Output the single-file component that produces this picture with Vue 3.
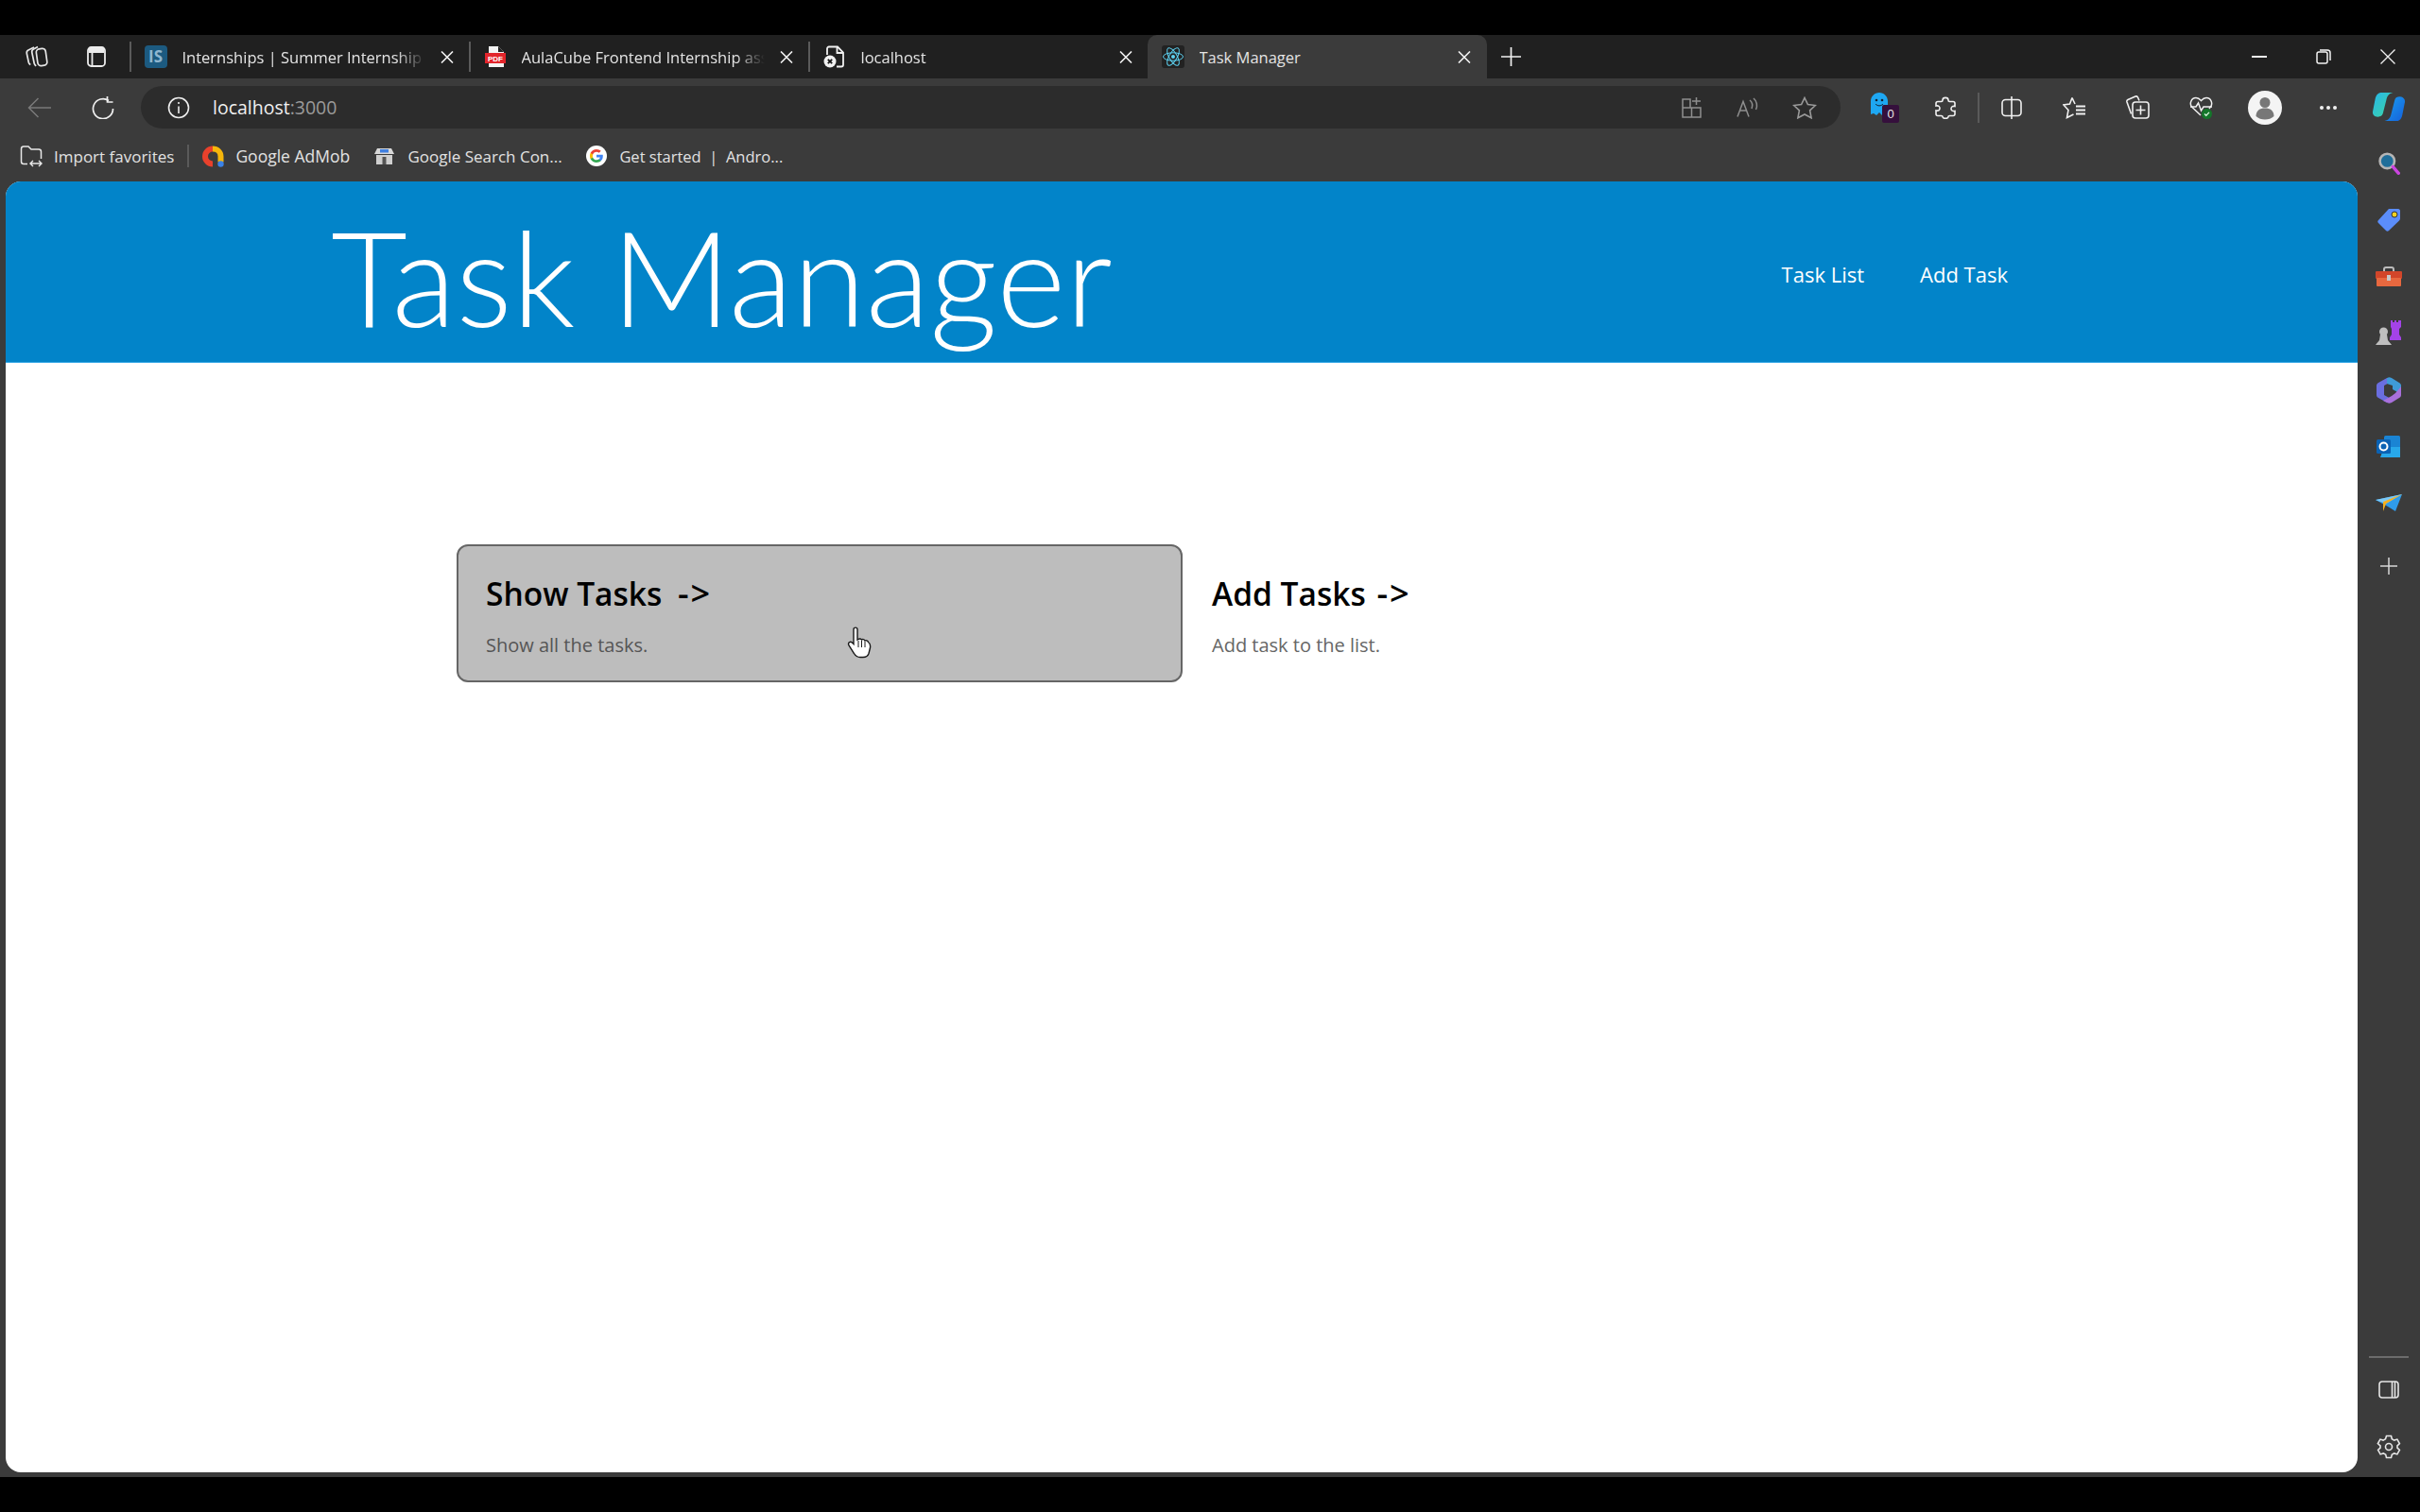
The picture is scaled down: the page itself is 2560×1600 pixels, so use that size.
<template>
  <div class="screen">
    <div class="tabstrip">
      <button class="strip-btn">
        <svg width="26" height="24" viewBox="0 0 26 24" fill="none" stroke="#e6e6e6" stroke-width="1.7">
          <path d="M10 2 4 5C2.500 5.800 2 7 2.300 8.500l2 9.500c.3 1.300 1 2 2 2.600" />
          <path d="M14 1.500 9.500 4C8 4.800 7.500 6 7.800 7.500l2.400 11.500c.3 1.300 1 2 2 2.800" />
          <rect x="13" y="3.500" width="10" height="18" rx="3.500" transform="rotate(-8 18 12)" />
        </svg>
      </button>
      <button class="strip-btn">
        <svg width="20" height="22" viewBox="0 0 20 22" fill="none" stroke="#ececec" stroke-width="1.8">
          <rect x="1" y="1" width="18" height="20" rx="3.500" />
          <path d="M5.500 7v14" />
          <path d="M2 2h16v5H2z" fill="#ececec" stroke="none" />
        </svg>
      </button>
      <template v-for="tab in tabs" :key="tab.title">
        <span class="tab-sep" :class="{ hidden: tab.noSep }"></span>
        <div class="tab" :class="{ active: tab.active }">
          <span v-if="tab.icon === 'is'" class="favicon fav-is">IS</span>
          <svg v-else-if="tab.icon === 'pdf'" class="favicon" viewBox="0 0 24 24">
            <path d="M5 1h10l6 6v16H5z" fill="#f4f4f4" />
            <path d="M15 1v6h6z" fill="#222" />
            <rect x="1" y="8" width="22" height="11" fill="#e2252b" />
            <text x="12" y="16.500" font-size="8" font-weight="700" fill="#fff" text-anchor="middle" font-family="Liberation Sans, sans-serif">PDF</text>
          </svg>
          <svg v-else-if="tab.icon === 'doc'" class="favicon" viewBox="0 0 24 24" fill="none">
            <path d="M4 10V3.500C4 2.500 4.800 1.500 6 1.500h9l6 6v13c0 1.200-1 2-2 2h-5" stroke="#f0f0f0" stroke-width="1.800" />
            <path d="M14.500 1.500v6.500H21" stroke="#f0f0f0" stroke-width="1.800" />
            <circle cx="7" cy="17" r="6.500" fill="#f0f0f0" />
            <path d="m4.800 14.800 4.400 4.400M9.200 14.800l-4.400 4.400" stroke="#111" stroke-width="1.800" />
          </svg>
          <svg v-else class="favicon fav-react" viewBox="0 0 24 24" fill="none" stroke="#5ed3f3" stroke-width="1">
            <ellipse cx="12" cy="12" rx="10.500" ry="4.200" />
            <ellipse cx="12" cy="12" rx="10.500" ry="4.200" transform="rotate(60 12 12)" />
            <ellipse cx="12" cy="12" rx="10.500" ry="4.200" transform="rotate(120 12 12)" />
            <circle cx="12" cy="12" r="2" fill="#5ed3f3" stroke="none" />
          </svg>
          <span class="tab-title">{{ tab.title }}</span>
          <svg class="tab-close" width="14" height="13" viewBox="0 0 14 13" stroke="#f2f2f2" stroke-width="1.600">
            <path d="m1 .5 12 12M13 .5l-12 12" />
          </svg>
        </div>
      </template>
      <button class="new-tab">
        <svg width="21" height="20" viewBox="0 0 21 20" stroke="#f0f0f0" stroke-width="1.700">
          <path d="M10.500 0v20M0 10h21" />
        </svg>
      </button>
      <div class="window-btns">
        <button class="win-btn">
          <svg width="16" height="6" viewBox="0 0 16 6" stroke="#f2f2f2" stroke-width="2"><path d="M0 3h16" /></svg>
        </button>
        <button class="win-btn">
          <svg width="16" height="16" viewBox="0 0 16 16" fill="none" stroke="#f2f2f2" stroke-width="1.500">
            <rect x="1" y="3" width="11" height="12" rx="2" />
            <path d="M4 1h8c1.800 0 3 1.200 3 3v8" />
          </svg>
        </button>
        <button class="win-btn">
          <svg width="16" height="16" viewBox="0 0 16 16" stroke="#f2f2f2" stroke-width="1.300"><path d="m.5.500 15 15M15.500.500l-15 15" /></svg>
        </button>
      </div>
    </div>

    <div class="browser">
      <div class="left-col">
        <div class="toolbar">
          <button class="nav-btn">
            <svg width="25" height="22" viewBox="0 0 25 22" fill="none" stroke="#7a7a7a" stroke-width="1.500"><path d="M25 11H2M11.500 1 1.500 11l10 10" /></svg>
          </button>
          <button class="nav-btn">
            <svg width="25" height="24" viewBox="0 0 25 24" fill="none" stroke="#efefef" stroke-width="1.700"><path d="M19 4.500A10.500 10.500 0 1 0 23.500 13" /><path d="M17.500 0v6h6" /></svg>
          </button>
          <div class="address">
            <svg width="24" height="24" viewBox="0 0 24 24" fill="none" stroke="#ededed" stroke-width="1.600">
              <circle cx="12" cy="12" r="10.500" /><path d="M12 10.500V18M12 6v2" />
            </svg>
            <span class="url">localhost<span class="url-port">:3000</span></span>
            <div class="address-icons">
              <button class="addr-btn">
                <svg width="21" height="22" viewBox="0 0 21 22" fill="none" stroke="#8e8e8e" stroke-width="1.500">
                  <path d="M1 2h8v9H1zM1 11h19v10H1zM10.500 11v10M15.500 0v8M11 4h9" />
                </svg>
              </button>
              <button class="addr-btn">
                <svg width="24" height="21" viewBox="0 0 24 21" fill="none" stroke="#8e8e8e" stroke-width="1.500">
                  <path d="m1 20.500 6-16 6 16M3.500 14h7M14 3c2.500 2 3.500 5 2 9M18 1c3.500 3 4.500 8 2.500 12" />
                </svg>
              </button>
              <button class="addr-btn">
                <svg width="26" height="24" viewBox="0 0 26 24" fill="none" stroke="#9a9a9a" stroke-width="1.600">
                  <path d="m13 1.500 3.400 7 8 1-5.800 5.300 1.500 8L13 19l-7.100 3.800 1.500-8L1.600 9.500l8-1z" />
                </svg>
              </button>
            </div>
          </div>
          <button class="tool-btn first">
            <svg width="30" height="32" viewBox="0 0 30 32">
              <path d="M0 23V9C0 4 4 0 9 0s9 4 9 9v14l-3-2-3 3-3-3-3 3-3-2z" fill="#1ea7f2" />
              <circle cx="6" cy="8" r="1.300" fill="#123" /><circle cx="12" cy="8" r="1.300" fill="#123" />
              <path d="M5 12c2 2.500 6 2.500 8 0" fill="none" stroke="#123" stroke-width="1" />
              <rect x="12" y="13" width="18" height="19" rx="2" fill="#35103c" />
              <text x="21" y="27" font-size="13" fill="#e6e6e6" text-anchor="middle" font-family="Liberation Sans, sans-serif">0</text>
            </svg>
          </button>
          <button class="tool-btn">
            <svg width="22" height="24" viewBox="0 0 22 24" fill="none" stroke="#f0f0f0" stroke-width="1.600">
              <path d="M8 4c0-3.500 6-3.500 6 0 0 1 .3 1.500 1.500 1.500H19c1 0 2 1 2 2v3c-3-.5-4 1-4 2.500s1 3 4 2.500v3c0 1-1 2-2 2h-3.500c-1 0-1.500.3-1.500 1 0 2.500-6 2.500-6 0 0-.7-.5-1-1.500-1H3c-1 0-2-1-2-2v-3.500c3 .7 4-1 4-2.500s-1-3-4-2.500V7.500c0-1 1-2 2-2h3.500C7.500 5.500 8 5 8 4z" />
            </svg>
          </button>
          <span class="tool-sep"></span>
          <button class="tool-btn wide">
            <svg width="22" height="24" viewBox="0 0 22 24" fill="none" stroke="#f0f0f0" stroke-width="1.600">
              <rect x="1" y="3.500" width="20" height="17" rx="3.500" /><path d="M11 0v24" />
            </svg>
          </button>
          <button class="tool-btn wide">
            <svg width="25" height="24" viewBox="0 0 25 24" fill="none" stroke="#f0f0f0" stroke-width="1.600">
              <path d="M10 1.500 7.500 8 1 9l5 5.500L4.500 22.500l7-3.500M10 1.500 13 8" /><path d="M14 10.500h10M14 14.500h10M14 18.500h10" stroke-width="2" />
            </svg>
          </button>
          <button class="tool-btn wide">
            <svg width="25" height="25" viewBox="0 0 25 25" fill="none" stroke="#f0f0f0" stroke-width="1.600">
              <path d="M5.500 19.500 1 7C.6 5.800 1 5 2 4.500L10 1c1-.4 2 0 2.500 1l1.500 3.500" />
              <rect x="7" y="7" width="17" height="17" rx="3" /><path d="M15.500 10.500v10M10.500 15.500h10" />
            </svg>
          </button>
          <button class="tool-btn wide">
            <svg width="25" height="24" viewBox="0 0 25 24" fill="none">
              <path d="M12 20 3 11.500C-.500 8 2 1.500 7 1.500c2.500 0 4 1.300 5.500 3 1.500-1.700 3-3 5.500-3 5 0 7.500 6.500 4 10L21 13" stroke="#f0f0f0" stroke-width="1.500" />
              <path d="M1 11h6l2.500-4 3 8 2.500-4h9" stroke="#f0f0f0" stroke-width="1.500" />
              <circle cx="18.500" cy="18.500" r="5.500" fill="#14772a" />
              <path d="m16 18.500 1.800 1.800 3.200-3.400" stroke="#d8f5dd" stroke-width="1.300" />
            </svg>
          </button>
          <button class="tool-btn wide avatar-btn">
            <span class="avatar">
              <svg width="36" height="36" viewBox="0 0 36 36">
                <circle cx="18" cy="12.500" r="5.500" fill="#777" />
                <path d="M8.500 27c0-6 4-8.500 9.500-8.500s9.500 2.500 9.500 8.500c-2.500 2.500-6 3.500-9.500 3.500s-7-1-9.500-3.500z" fill="#777" />
              </svg>
            </span>
          </button>
          <button class="tool-btn wide dots-btn">
            <svg width="20" height="6" viewBox="0 0 20 6" fill="#f0f0f0"><circle cx="3" cy="3" r="2" /><circle cx="10" cy="3" r="2" /><circle cx="17" cy="3" r="2" /></svg>
          </button>
        </div>

        <div class="bookmarks">
          <div class="bookmark import">
            <svg width="24" height="23" viewBox="0 0 24 23" fill="none" stroke="#e8e8e8" stroke-width="1.500">
              <path d="M8 19.500H4c-1.500 0-2.500-1-2.500-2.500V3.500C1.500 2 2.500 1 4 1h5l3 3h8c1.500 0 2.500 1 2.500 2.500V14" />
              <path d="M11 19h12M14 16l-3 3 3 3M20 16l3 3-3 3" stroke-width="1.400" />
            </svg>
            <span>Import favorites</span>
          </div>
          <span class="book-sep"></span>
          <div class="bookmark admob">
            <svg width="23" height="23" viewBox="0 0 23 23" fill="none">
              <path d="M11 3.500a8 8 0 0 0 0 16" stroke="#e8412c" stroke-width="6" />
              <path d="M11 3.500c5 0 8.500 3.500 8.500 8v6" stroke="#f6b60b" stroke-width="6" />
              <circle cx="19.500" cy="19.500" r="3.200" fill="#3b82e6" />
            </svg>
            <span>Google AdMob</span>
          </div>
          <div class="bookmark gsc">
            <svg width="21" height="17" viewBox="0 0 21 17">
              <path d="M3 0h15l3 6H0z" fill="#d8d8d8" />
              <rect x="6" y="1" width="9" height="3.500" fill="#3f7fe0" />
              <rect x="2" y="7" width="17" height="10" fill="#cfcfcf" />
              <path d="M8.500 9h4v8h-4z" fill="#555" />
            </svg>
            <span>Google Search Con...</span>
          </div>
          <div class="bookmark google">
            <svg width="22" height="22" viewBox="0 0 22 22">
              <circle cx="11" cy="11" r="11" fill="#fff" />
              <path d="M17.800 11.200c0-.5 0-1-.1-1.400H11v2.700h3.800c-.2.900-.7 1.600-1.400 2.100v1.700h2.300c1.300-1.200 2.100-3 2.100-5.100z" fill="#4285f4" />
              <path d="M11 18c1.900 0 3.500-.6 4.700-1.700l-2.300-1.700c-.6.400-1.400.7-2.400.7-1.800 0-3.400-1.200-3.900-2.900H4.700v1.800C5.900 16.500 8.300 18 11 18z" fill="#34a853" />
              <path d="M7.100 12.400c-.3-.9-.3-1.900 0-2.800V7.800H4.700c-1 1.900-1 4.500 0 6.400z" fill="#fbbc05" />
              <path d="M11 6.700c1 0 2 .4 2.700 1.100l2-2C14.500 4.700 12.900 4 11 4 8.300 4 5.900 5.500 4.700 7.800l2.400 1.800C7.600 7.900 9.200 6.700 11 6.700z" fill="#ea4335" />
            </svg>
            <span>Get started &nbsp;|&nbsp; Andro...</span>
          </div>
        </div>

        <div class="page">
          <header class="app-header">
            <h1 class="app-title">Task Manager</h1>
            <nav class="app-nav">
              <a>Task List</a>
              <a>Add Task</a>
            </nav>
          </header>
          <div class="cards">
            <div v-for="card in cards" :key="card.title" class="card" :class="{ hovered: card.hovered }">
              <h2>{{ card.title }} <span class="arrow">-&gt;</span></h2>
              <p>{{ card.text }}</p>
              <svg v-if="card.hovered" class="cursor" width="28" height="34" viewBox="0 0 28 34">
                <path d="M7 3c0-2.500 4-2.500 4 0v11l1-.5c1-1 3-.5 3.500.5 1-.8 3-.5 3.500 1 1-.6 3-.2 3.500 1.500 1.500 1 2.500 3 2 6l-1.500 6c-1 3-3 4-6 4h-3c-3 0-5-1.500-6.500-4L2 20c-1.500-3 1.500-5 4-2.500l1 1z" fill="#fff" stroke="#1a1a1a" stroke-width="1.400" />
                <path d="M12 15v7M15.500 15v7M19 16v6" stroke="#1a1a1a" stroke-width="1" />
              </svg>
            </div>
          </div>
        </div>
      </div>

      <aside class="rail">
        <div class="rail-item">
          <svg width="36" height="32" viewBox="0 0 40 36">
            <defs>
              <linearGradient id="cpA" x1="0" y1="0" x2="1" y2="1"><stop offset="0" stop-color="#27b7ea" /><stop offset="1" stop-color="#3ed69f" /></linearGradient>
              <linearGradient id="cpB" x1="0" y1="0" x2="1" y2="1"><stop offset="0" stop-color="#1b9fee" /><stop offset="1" stop-color="#1460dc" /></linearGradient>
            </defs>
            <path d="M12 1h13c-5 1-7 4-8 9l-4 16c-1 3-3 4-6 4-4 0-7-3-6-7l3-15c1-5 4-7 8-7z" fill="url(#cpA)" />
            <path d="M28 35H15c5-1 7-4 8-9l4-16c1-3 3-4 6-4 4 0 7 3 6 7l-3 15c-1 5-4 7-8 7z" fill="url(#cpB)" />
          </svg>
        </div>
        <div class="rail-item">
          <svg width="24" height="24" viewBox="0 0 28 28">
            <circle cx="12" cy="11" r="9" fill="#1f6e9a" stroke="#b5b5b5" stroke-width="3" />
            <path d="m19 18 7 8" stroke="#cb45e0" stroke-width="4" stroke-linecap="round" />
          </svg>
        </div>
        <div class="rail-item">
          <svg width="26" height="26" viewBox="0 0 26 26">
            <path d="M13 1h10c1 0 2 1 2 2v8c0 1-.5 2-1 2.500L13 24c-1 1-2 1-3 0l-8-8c-1-1-1-2 0-3z" fill="#5b8dfa" />
            <circle cx="19" cy="7" r="3" fill="#f5d020" stroke="#333" stroke-width="1" />
          </svg>
        </div>
        <div class="rail-item">
          <svg width="28" height="22" viewBox="0 0 28 22">
            <path d="M9 6V3c0-1 1-2 2-2h6c1 0 2 1 2 2v3" fill="none" stroke="#bcbcbc" stroke-width="2" />
            <rect x="0" y="5" width="28" height="8" rx="1" fill="#d2462a" />
            <rect x="1" y="12" width="26" height="9" rx="1" fill="#e8683f" />
            <rect x="12" y="9" width="4" height="6" fill="#c8c8c8" />
          </svg>
        </div>
        <div class="rail-item">
          <svg width="28" height="30" viewBox="0 0 28 30">
            <circle cx="8.500" cy="13" r="4.500" fill="#bfbfbf" />
            <path d="M5 16h7l1 6c1 2 3 3 4 5H0c1-2 3-3 4-5z" fill="#bfbfbf" />
            <path d="M16 1h2v2h2V1h2v2h2V1h3v7l-2 2v6l2 3v3H15v-3l2-3v-6l-1-2z" fill="#a443e8" />
          </svg>
        </div>
        <div class="rail-item">
          <svg width="26" height="28" viewBox="0 0 26 28">
            <path d="M11 1 2 6c-1 .5-2 1.500-2 3v10c0 1.500 1 2.500 2 3l9 5 6-3-9-5V9l9-5z" fill="#6a6ee0" />
            <path d="M11 1c2-1 3-1 5 0l8 5c1 .7 2 1.500 2 3v9L17 13V9l-6-2z" fill="#3f9bd8" />
            <path d="M26 10v9c0 1.500-1 2.500-2 3l-8 5c-2 1-3 1-5 0l-4-2 9-5 4-3z" fill="#a870dc" />
          </svg>
        </div>
        <div class="rail-item">
          <svg width="26" height="26" viewBox="0 0 26 26">
            <rect x="8" y="1" width="17" height="23" rx="1.500" fill="#1a84d4" />
            <path d="M8 13h17v11H4z" fill="#28a8ea" />
            <rect x="0" y="5" width="15" height="15" rx="1.500" fill="#0a62b4" />
            <circle cx="7.500" cy="12.500" r="4" fill="none" stroke="#fff" stroke-width="2" />
          </svg>
        </div>
        <div class="rail-item">
          <svg width="28" height="20" viewBox="0 0 28 20">
            <path d="M0 6 28 0 21 18l-8-5z" fill="#2f9bea" />
            <path d="M0 6 28 0 11 10z" fill="#7cc8f5" />
            <path d="m8 8 20-8-17 10-3 8z" fill="#f5b01e" />
          </svg>
        </div>
        <div class="rail-item plus">
          <svg width="18" height="18" viewBox="0 0 18 18" stroke="#d8d8d8" stroke-width="1.500"><path d="M9 0v18M0 9h18" /></svg>
        </div>
        <div class="rail-bottom">
          <span class="rail-line"></span>
          <div class="rail-item small">
            <svg width="22" height="20" viewBox="0 0 22 20" fill="none" stroke="#e6e6e6" stroke-width="1.600">
              <rect x="1" y="1" width="20" height="17" rx="3" /><path d="M14.500 1v17M17.500 1v17" />
            </svg>
          </div>
          <div class="rail-item small">
            <svg width="26" height="26" viewBox="0 0 26 26" fill="none" stroke="#e6e6e6" stroke-width="1.600">
              <circle cx="13" cy="13" r="3.500" />
              <path d="M10.500 1.500h5l.8 3.300 2.400 1.300 3.200-1 2.500 4.400-2.400 2.300v2.400l2.400 2.300-2.500 4.400-3.200-1-2.400 1.300-.8 3.300h-5l-.8-3.300-2.400-1.300-3.200 1-2.500-4.400 2.400-2.300v-2.400L1.400 9.500l2.500-4.400 3.200 1 2.400-1.300z" />
            </svg>
          </div>
        </div>
      </aside>
    </div>
  </div>
</template>

<script setup>
const tabs = [
  { title: 'Internships | Summer Internship 2024', icon: 'is' },
  { title: 'AulaCube Frontend Internship assignment', icon: 'pdf' },
  { title: 'localhost', icon: 'doc' },
  { title: 'Task Manager', icon: 'react', active: true, noSep: true }
]

const cards = [
  { title: 'Show Tasks', text: 'Show all the tasks.', hovered: true },
  { title: 'Add Tasks', text: 'Add task to the list.' }
]
</script>

<style>
html, body {
  margin: 0;
  background: #000;
}
</style>

<style scoped>
.screen {
  width: 2560px;
  height: 1600px;
  box-sizing: border-box;
  padding: 37px 0;
  background: #000;
  display: flex;
  flex-direction: column;
  font-family: "Open Sans", "Noto Sans", sans-serif;
  color: #eee;
  overflow: hidden;
}

button {
  background: none;
  border: none;
  padding: 0;
  display: flex;
  align-items: center;
  justify-content: center;
  flex-shrink: 0;
}

/* tab strip */
.tabstrip {
  height: 46px;
  flex-shrink: 0;
  background: #202020;
  display: flex;
  align-items: center;
  padding-left: 7px;
}

.strip-btn {
  width: 63px;
  height: 46px;
}

.strip-btn + .strip-btn {
  margin-right: 3.5px;
}

.tab-sep {
  width: 2px;
  height: 32px;
  background: #5a5a5a;
  flex-shrink: 0;
}

.tab-sep.hidden {
  background: transparent;
  width: 0;
}

.tab {
  width: 357px;
  height: 46px;
  flex-shrink: 0;
  box-sizing: border-box;
  display: flex;
  align-items: center;
  padding: 0 16px 0 14px;
  gap: 16px;
}

.tab.active {
  width: 359px;
  background: #3b3b3b;
  border-radius: 10px 10px 0 0;
  padding-left: 15px;
  padding-right: 17px;
}

.favicon {
  width: 24px;
  height: 24px;
  flex-shrink: 0;
}

.fav-is {
  background: #1c5a80;
  color: #8fb6cf;
  font-size: 17px;
  font-weight: 700;
  line-height: 24px;
  text-align: center;
  border-radius: 4px;
}

.fav-react {
  background: #222;
  border-radius: 3px;
}

.tab-title {
  flex: 1;
  min-width: 0;
  font-size: 16.5px;
  white-space: nowrap;
  overflow: hidden;
  color: #e4e4e4;
  -webkit-mask-image: linear-gradient(to right, #000 88%, transparent 100%);
  mask-image: linear-gradient(to right, #000 88%, transparent 100%);
}

.tab.active .tab-title {
  -webkit-mask-image: none;
  mask-image: none;
}

.new-tab {
  width: 52px;
  height: 46px;
}

.window-btns {
  margin-left: auto;
  display: flex;
}

.win-btn {
  width: 68px;
  height: 46px;
}

/* rest of the browser */
.browser {
  flex: 1;
  min-height: 0;
  display: flex;
  background: #3b3b3b;
}

.left-col {
  width: 2494px;
  flex-shrink: 0;
  display: flex;
  flex-direction: column;
}

.toolbar {
  height: 45px;
  margin-top: 8px;
  flex-shrink: 0;
  display: flex;
  align-items: center;
  padding-left: 8px;
}

.nav-btn {
  width: 67px;
  height: 45px;
}

.address {
  width: 1798px;
  height: 45px;
  margin-left: 7px;
  margin-right: 10px;
  flex-shrink: 0;
  box-sizing: border-box;
  background: #2c2c2c;
  border-radius: 23px;
  display: flex;
  align-items: center;
  padding-left: 28px;
  gap: 24px;
}

.url {
  font-size: 19.5px;
  color: #f0f0f0;
}

.url-port {
  color: #9a9a9a;
}

.address-icons {
  margin-left: auto;
  margin-right: 8px;
  display: flex;
}

.addr-btn {
  width: 60px;
  height: 45px;
}

.tool-btn {
  width: 66px;
  height: 45px;
}

.tool-btn.first {
  margin-left: 6px;
  width: 62px;
}

.tool-btn.wide {
  width: 67px;
}

.tool-btn.wide.avatar-btn {
  margin-left: 0;
  width: 68px;
}

.tool-btn.wide.dots-btn {
  margin-left: 0;
  width: 66px;
}

.tool-sep {
  width: 2px;
  height: 32px;
  background: #5a5a5a;
  margin: 0 0 0 1px;
  flex-shrink: 0;
}

.avatar {
  width: 36px;
  height: 36px;
  border-radius: 50%;
  background: #f4f4f4;
  overflow: hidden;
  display: block;
}

/* bookmarks bar */
.bookmarks {
  height: 56px;
  flex-shrink: 0;
  box-sizing: border-box;
  display: flex;
  align-items: center;
  padding: 2px 0 0 21px;
  font-size: 17px;
  color: #e2e2e2;
}

.bookmark {
  display: flex;
  align-items: center;
  gap: 12px;
  white-space: nowrap;
  flex-shrink: 0;
}

.bookmark.admob {
  width: 182px;
}

.bookmark.admob span {
  font-size: 17.5px;
}

.bookmark.gsc {
  width: 224px;
  gap: 14px;
}

.bookmark.google {
  gap: 13px;
  font-size: 16.5px;
}

.book-sep {
  width: 2px;
  height: 24px;
  background: #5a5a5a;
  margin: 0 14px;
  flex-shrink: 0;
}

/* the page */
.page {
  flex: 1;
  min-height: 0;
  margin: 0 0 5px 6px;
  background: #fff;
  border-radius: 16px;
  overflow: hidden;
}

.app-header {
  height: 192px;
  box-sizing: border-box;
  background: #0284c9;
  border-bottom: 1px solid #38a9e6;
  display: flex;
  align-items: center;
  justify-content: space-between;
  padding: 0 370px 0 344px;
}

.app-title {
  margin: 8px 0 0;
  font-family: Lato, "Open Sans", sans-serif;
  font-size: 140px;
  font-weight: 300;
  line-height: 176px;
  color: #fff;
  white-space: nowrap;
}

.app-nav {
  display: flex;
  gap: 59px;
  font-size: 22px;
  color: #fff;
  margin-top: 4px;
}

.cards {
  display: flex;
  margin-top: 192px;
  padding-left: 477px;
}

.card {
  position: relative;
  width: 768px;
  height: 146px;
  box-sizing: border-box;
  padding: 26px 29px;
  border: 2px solid transparent;
  border-radius: 12px;
  color: #000;
}

.card.hovered {
  background: #bdbdbd;
  border-color: #666;
}

.card h2 {
  margin: 0;
  font-size: 33.5px;
  font-weight: 600;
  line-height: 48px;
}

.arrow {
  margin-left: 3px;
  font-size: 36px;
  font-weight: 600;
  letter-spacing: 2px;
}

.card.hovered .arrow {
  margin-left: 8px;
}

.card p {
  margin: 17px 0 0;
  font-size: 20px;
  line-height: 28px;
  color: #666;
}

.card.hovered p {
  color: #555;
}

.cursor {
  position: absolute;
  left: 411px;
  top: 85px;
}

/* side rail */
.rail {
  flex: 1;
  display: flex;
  flex-direction: column;
  padding-bottom: 2px;
}

.rail-item {
  height: 60px;
  flex-shrink: 0;
  display: flex;
  align-items: center;
  justify-content: center;
}

.rail-item.plus {
  margin-top: 6px;
}

.rail-bottom {
  margin-top: auto;
  display: flex;
  flex-direction: column;
  align-items: center;
}

.rail-line {
  width: 42px;
  height: 2px;
  background: #6c6c6c;
  margin-bottom: 4px;
}

.rail-item.small {
  width: 100%;
}
</style>
